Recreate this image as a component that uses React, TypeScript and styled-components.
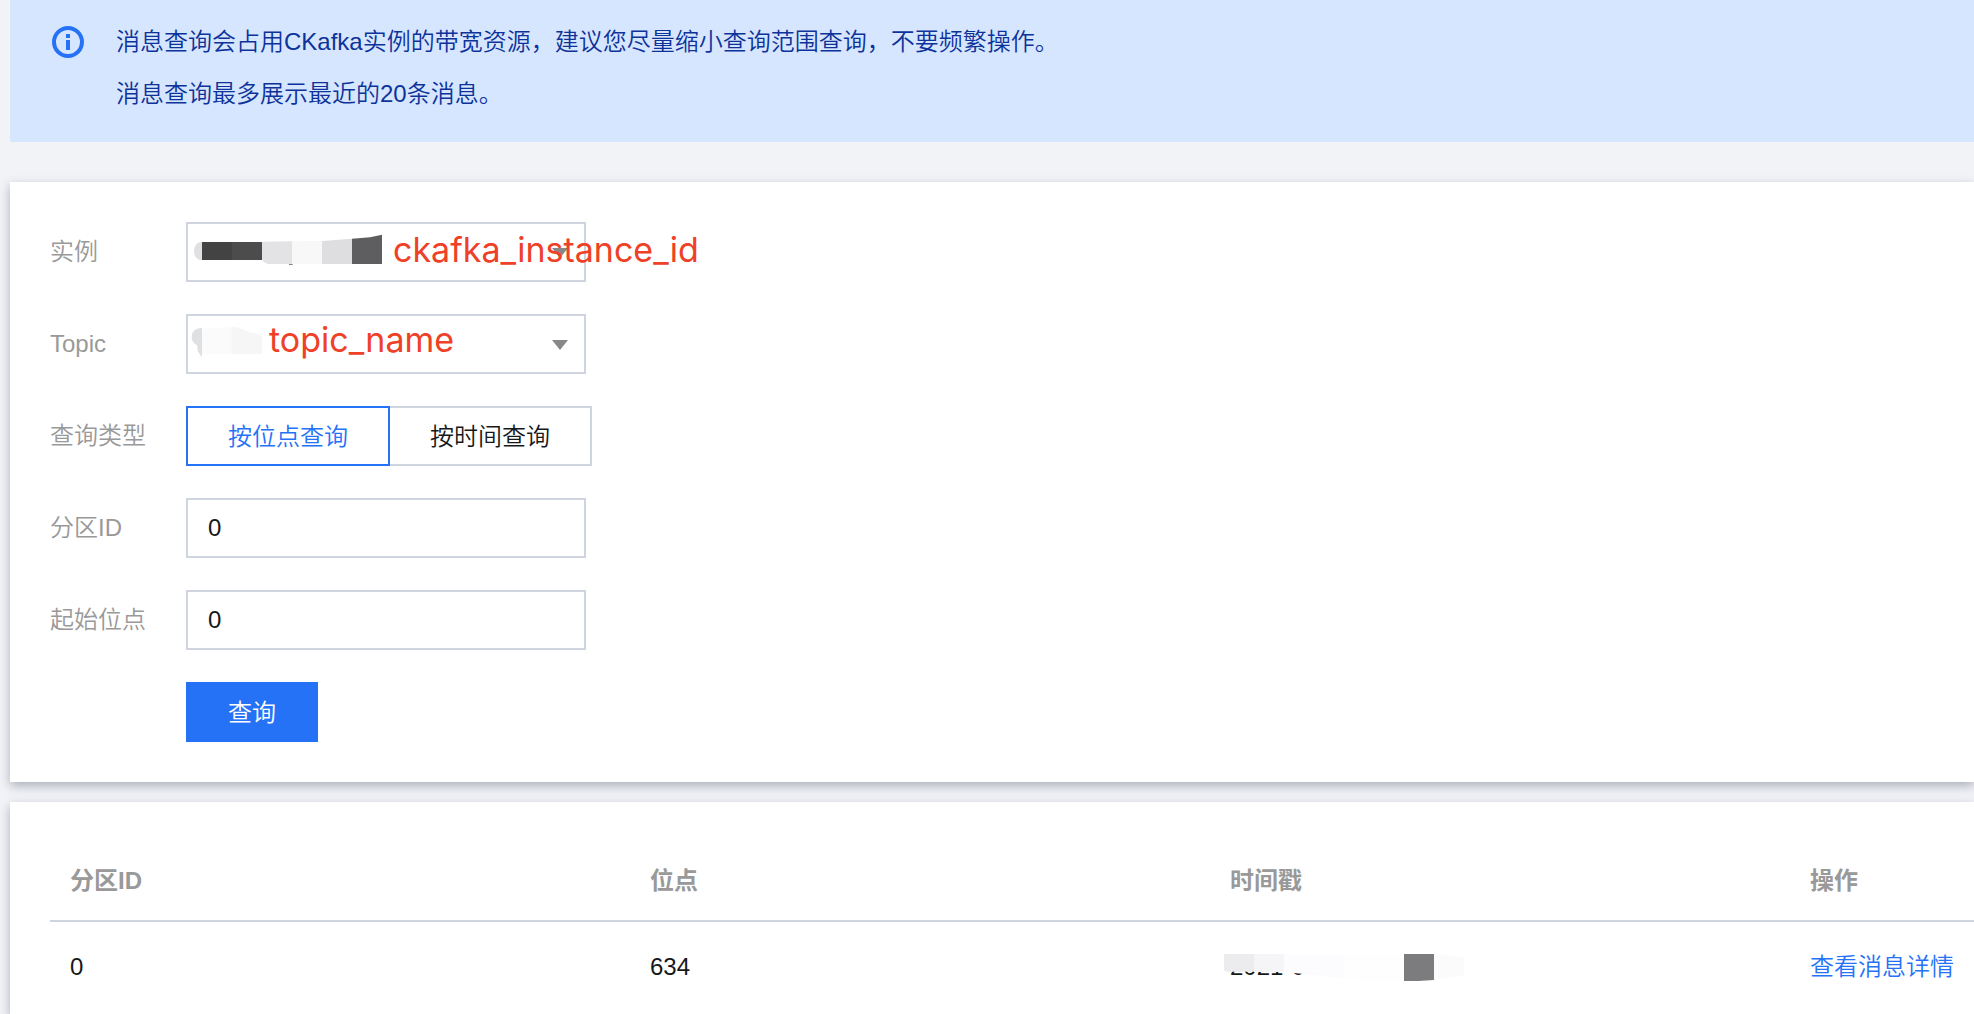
import React, { useState } from "react";
import styled, { createGlobalStyle } from "styled-components";

const GlobalStyle = createGlobalStyle`
  *, *::before, *::after { box-sizing: border-box; }
  body {
    margin: 0;
    background: #f2f3f7;
    color: #16181a;
    font-family: "Liberation Sans", "Noto Sans CJK SC DemiLight", "Noto Sans CJK SC", sans-serif;
    font-size: 24px;
    font-weight: 350;
    line-height: 36px;
  }
  button, input, select { font: inherit; color: inherit; border-radius: 0; margin: 0; }
`;

const Page = styled.main`
  display: flex;
  flex-direction: column;
  min-height: 100vh;
  padding-left: 10px;
  overflow: hidden;
`;

const Alert = styled.section`
  display: flex;
  gap: 32px;
  padding: 16px 42px 22px;
  margin-bottom: 40px;
  background: #d7e6ff;
  color: #0d339b;
`;

const AlertIcon = styled.svg`
  flex: none;
  width: 32px;
  height: 32px;
  margin-top: 10px;
`;

const AlertText = styled.p`
  margin: 0;
  line-height: 52px;
`;

const Panel = styled.section<{ $grow?: boolean }>`
  padding: 40px 0 ${(p) => (p.$grow ? "0" : "40px")} 40px;
  margin-bottom: ${(p) => (p.$grow ? "0" : "20px")};
  flex: ${(p) => (p.$grow ? "1" : "none")};
  background: #fff;
  box-shadow: 0 4px 10px rgba(54, 58, 80, 0.36);
`;

const Form = styled.form`
  display: flex;
  flex-direction: column;
  gap: 32px;
`;

const Row = styled.div`
  display: grid;
  grid-template-columns: 136px 1fr;
  align-items: center;
`;

const Label = styled.label`
  color: #999;
`;

const Actions = styled.div`
  padding-left: 136px;
`;

const Control = styled.div`
  position: relative;
  width: 400px;
`;

const Field = styled.input`
  display: block;
  width: 400px;
  height: 60px;
  padding: 0 20px;
  border: 2px solid #cfd5de;
  background: #fff;
  outline: none;
`;

const Select = styled.select`
  display: block;
  width: 100%;
  height: 60px;
  padding: 0 20px;
  border: 2px solid #cfd5de;
  background: #fff;
  appearance: none;
  outline: none;
`;

const Caret = styled.svg`
  position: absolute;
  right: 18px;
  top: 26px;
  width: 16px;
  height: 10px;
  pointer-events: none;
`;

const Mask = styled.svg`
  position: absolute;
  left: 0;
  top: 0;
  width: 200px;
  height: 60px;
  pointer-events: none;
`;

const Note = styled.span<{ $left: number; $top: number }>`
  position: absolute;
  left: ${(p) => p.$left}px;
  top: ${(p) => p.$top}px;
  color: #ee4127;
  font-family: Inter, sans-serif;
  font-size: 34px;
  font-weight: 400;
  line-height: 40px;
  white-space: nowrap;
  pointer-events: none;
`;

const Segment = styled.div`
  display: flex;
`;

const SegmentButton = styled.button<{ $active: boolean }>`
  height: 60px;
  padding: 2px 40px 0;
  border: 2px solid ${(p) => (p.$active ? "#2672f7" : "#cfd5de")};
  background: #fff;
  color: ${(p) => (p.$active ? "#2672f7" : "inherit")};
  cursor: pointer;

  ${(p) => !p.$active && "&:last-child { border-left: 0; }"}
  ${(p) => !p.$active && "&:first-child { border-right: 0; }"}
`;

const Submit = styled.button`
  display: block;
  width: 132px;
  height: 60px;
  padding: 2px 0 0;
  border: 0;
  background: #2672f7;
  color: #fff;
  cursor: pointer;
`;

const Table = styled.table`
  width: 100%;
  table-layout: fixed;
  border-collapse: separate;
  border-spacing: 0;
`;

const HeadCell = styled.th<{ $action?: boolean }>`
  width: ${(p) => (p.$action ? "184px" : "auto")};
  height: 80px;
  padding: 0 20px;
  border-bottom: 2px solid #cfd5de;
  color: #999;
  font-family: "Liberation Sans", "Noto Sans CJK SC", sans-serif;
  font-weight: 700;
  text-align: left;
`;

const Cell = styled.td`
  position: relative;
  height: 90px;
  padding: 0 20px;
  white-space: nowrap;
`;

const TimeMask = styled.svg`
  position: absolute;
  left: 14px;
  top: 32px;
  width: 240px;
  height: 28px;
  pointer-events: none;
`;

const DetailLink = styled.a`
  color: #2672f7;
  text-decoration: none;
`;

const Arrow = () => (
  <Caret viewBox="0 0 16 10" aria-hidden="true">
    <path d="M0 0h16L8 10z" fill="#888" />
  </Caret>
);

const modes = ["按位点查询", "按时间查询"];

export default function App() {
  const [mode, setMode] = useState(0);
  const [partition, setPartition] = useState("0");
  const [offset, setOffset] = useState("0");

  return (
    <>
      <GlobalStyle />
      <Page>
        <Alert>
          <AlertIcon viewBox="0 0 32 32" aria-hidden="true">
            <circle cx="16" cy="16" r="14" fill="none" stroke="#2672f7" strokeWidth="4" />
            <path d="M14 8h4v4h-4zM14 14h4v10h-4z" fill="#2672f7" />
          </AlertIcon>
          <div>
            <AlertText>消息查询会占用CKafka实例的带宽资源，建议您尽量缩小查询范围查询，不要频繁操作。</AlertText>
            <AlertText>消息查询最多展示最近的20条消息。</AlertText>
          </div>
        </Alert>

        <Panel>
          <Form onSubmit={(e) => e.preventDefault()}>
            <Row>
              <Label htmlFor="instance">实例</Label>
              <Control>
                <Select id="instance" />
                <Arrow />
                <Mask viewBox="0 0 600 180" aria-hidden="true">
                  <path d="M48 60h-4a20 27 0 0 0 0 54h4z" fill="#dfe0e2" />
                  <path d="M48 60h90v54H48z" fill="#434343" />
                  <path d="M138 60h90v54h-90z" fill="#4c4c4d" />
                  <path d="M228 59l90-1v68h-70q-10 0-20-12z" fill="#e3e3e5" />
                  <path d="M318 58l90-1v69h-90z" fill="#f8f8f8" />
                  <path d="M408 57l90-7v76h-90z" fill="#dedee0" />
                  <path d="M498 50l54-4 36-8v88h-90z" fill="#5e5e60" />
                  <path d="M309 126h11v2h-11z" fill="#444" />
                </Mask>
                <Note $left={207} $top={8}>ckafka_instance_id</Note>
              </Control>
            </Row>
            <Row>
              <Label htmlFor="topic">Topic</Label>
              <Control>
                <Select id="topic" />
                <Arrow />
                <Mask viewBox="0 0 600 180" aria-hidden="true">
                  <path d="M48 42h-6a27 27 0 0 0-8 52q-2 22 14 34z" fill="#dfe0e2" />
                  <path d="M48 44l88-4v80H48z" fill="#fbfbfb" />
                  <path d="M136 40h18l44 16q24 2 30 12v52h-92z" fill="#f6f6f6" />
                </Mask>
                <Note $left={83} $top={6}>topic_name</Note>
              </Control>
            </Row>
            <Row>
              <Label as="span" id="mode-label">查询类型</Label>
              <Segment role="group" aria-labelledby="mode-label">
                {modes.map((name, i) => (
                  <SegmentButton
                    key={name}
                    type="button"
                    $active={mode === i}
                    aria-pressed={mode === i}
                    onClick={() => setMode(i)}
                  >
                    {name}
                  </SegmentButton>
                ))}
              </Segment>
            </Row>
            <Row>
              <Label htmlFor="partition">分区ID</Label>
              <Field id="partition" value={partition} onChange={(e) => setPartition(e.target.value)} />
            </Row>
            <Row>
              <Label htmlFor="offset">起始位点</Label>
              <Field id="offset" value={offset} onChange={(e) => setOffset(e.target.value)} />
            </Row>
            <Actions>
              <Submit type="submit">查询</Submit>
            </Actions>
          </Form>
        </Panel>

        <Panel $grow>
          <Table>
            <thead>
              <tr>
                <HeadCell>分区ID</HeadCell>
                <HeadCell>位点</HeadCell>
                <HeadCell>时间戳</HeadCell>
                <HeadCell $action>操作</HeadCell>
              </tr>
            </thead>
            <tbody>
              <tr>
                <Cell>0</Cell>
                <Cell>634</Cell>
                <Cell>
                  2021-04
                  <TimeMask viewBox="0 0 720 84" aria-hidden="true">
                    <path d="M0 0h90v53H8q-8 0-8-6z" fill="#ececee" />
                    <path d="M90 0h90v54H90z" fill="#f5f5f7" />
                    <path d="M180 0h180v73l-90-10-90-9z" fill="#fcfcff" />
                    <path d="M360 0h180v81H420l-60-8z" fill="#fefefe" />
                    <path d="M540 0h90v78l-46 3h-44z" fill="#7c7c7e" />
                    <path d="M630 0l90 10v53l-90 15z" fill="#fbfbfb" />
                  </TimeMask>
                </Cell>
                <Cell>
                  <DetailLink href="#detail">查看消息详情</DetailLink>
                </Cell>
              </tr>
            </tbody>
          </Table>
        </Panel>
      </Page>
    </>
  );
}
